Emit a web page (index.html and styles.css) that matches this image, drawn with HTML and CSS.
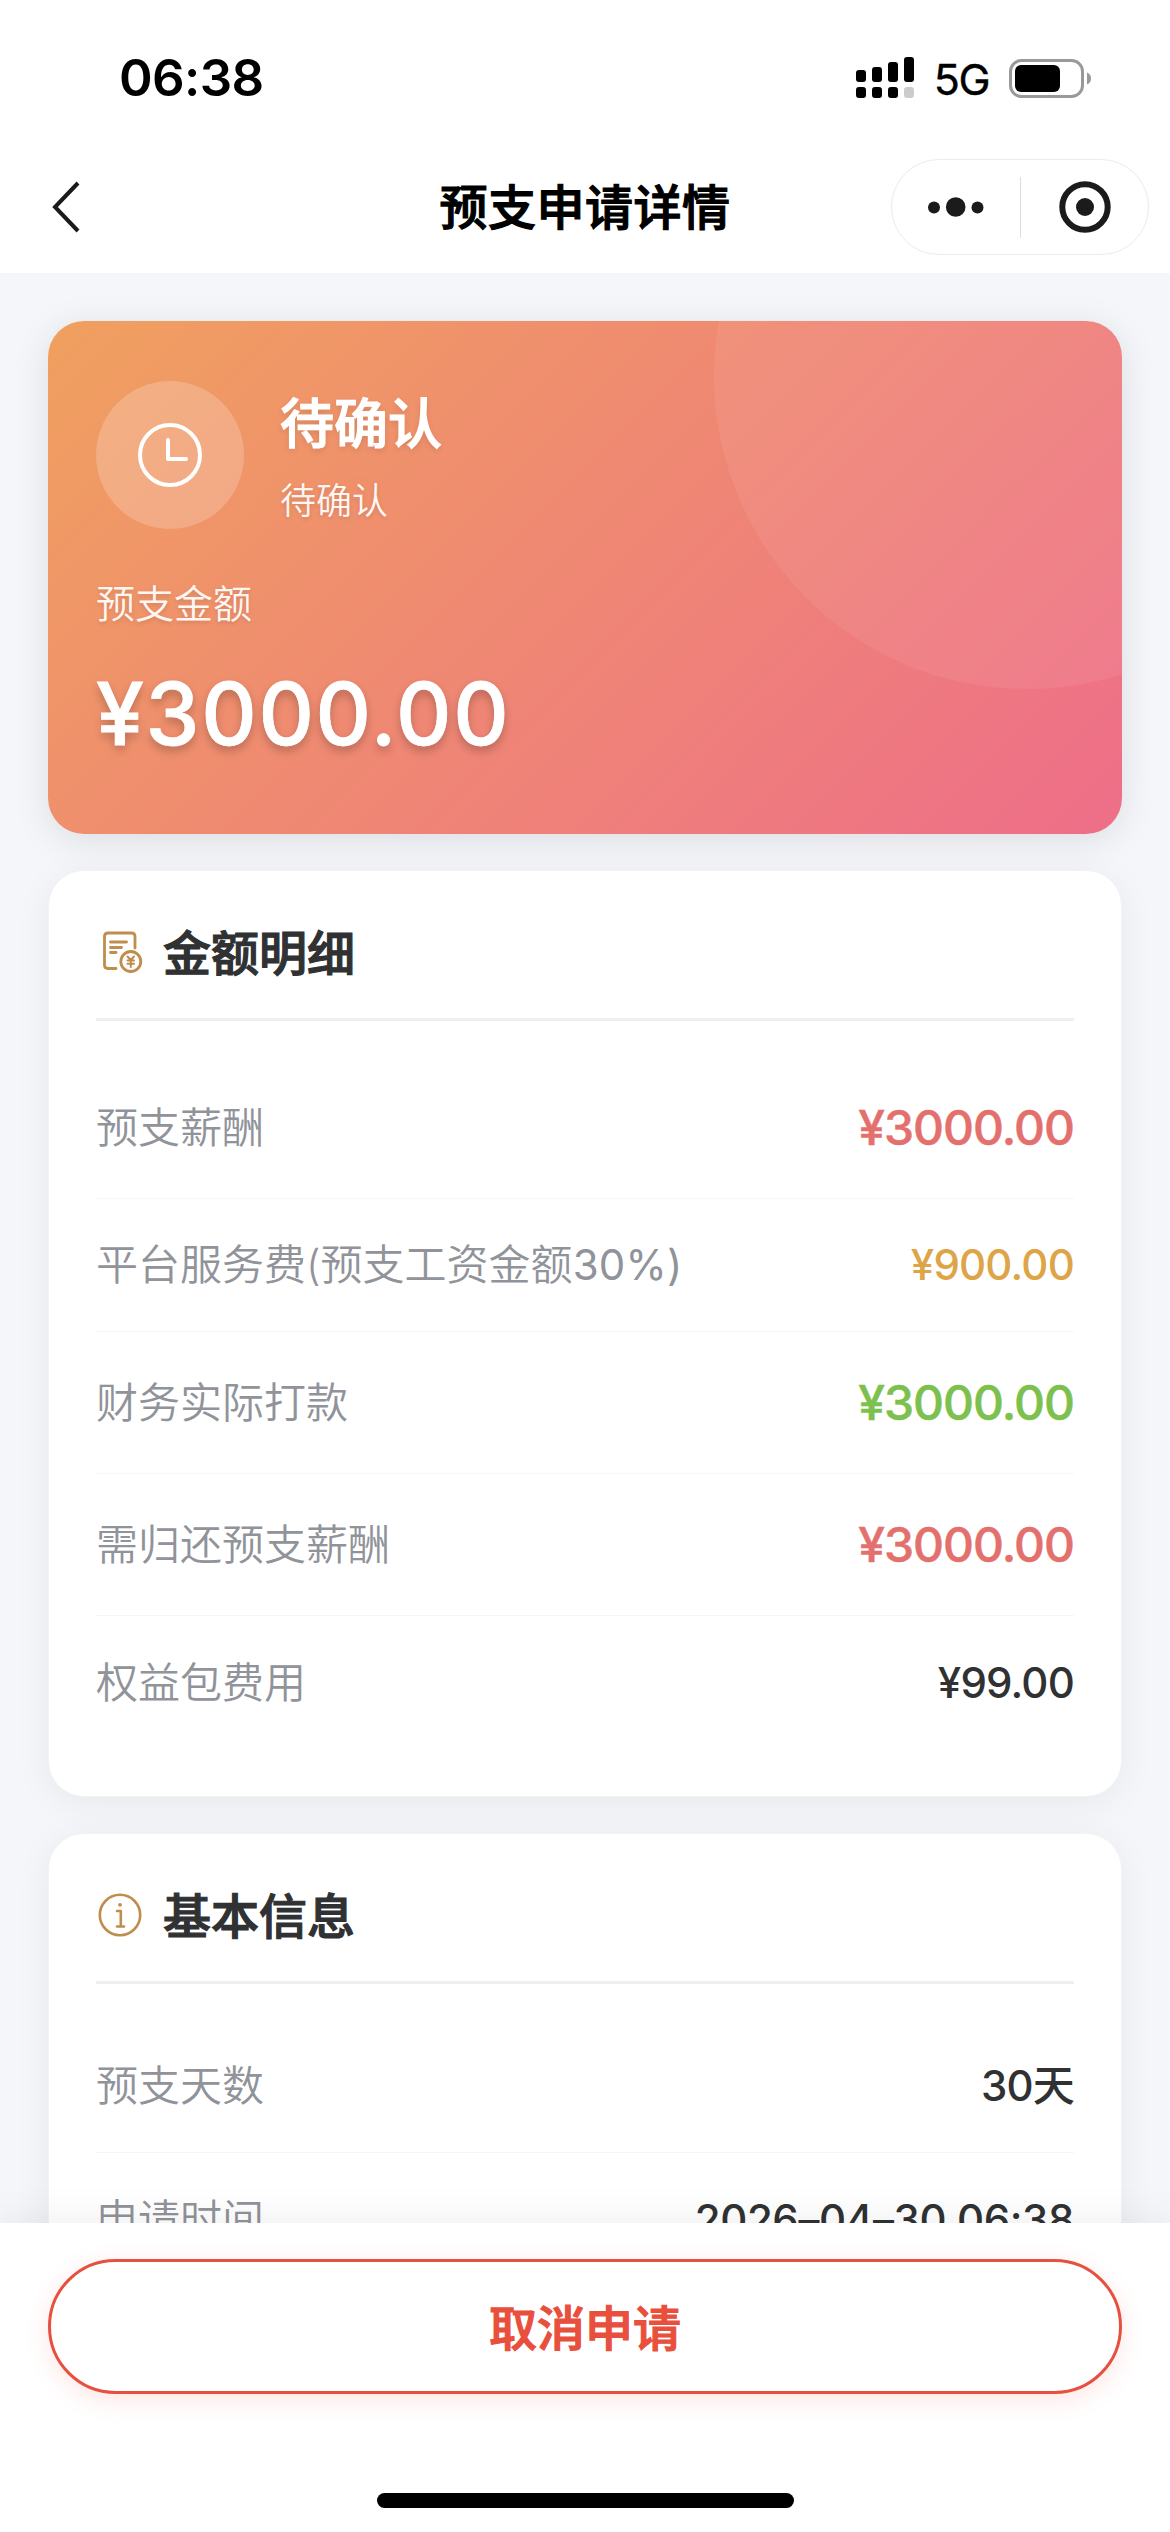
FILE: index.html
```html
<!DOCTYPE html>
<html lang="zh-CN">
<head>
<meta charset="utf-8">
<title>预支申请详情</title>
<link rel="stylesheet" href="styles.css">
</head>
<body>
<div class="page">
  <header class="top">
    <div class="status">
      <span class="time">06:38</span>
      <div class="status-right">
        <svg class="signal" width="58" height="42" viewBox="0 0 58 42">
          <rect x="0" y="13" width="10" height="12" rx="3"/><rect x="16" y="10" width="10" height="15" rx="3"/>
          <rect x="32" y="5" width="10" height="20" rx="3"/><rect x="48" y="0" width="10" height="25" rx="3"/>
          <rect x="0" y="30" width="10" height="11" rx="3"/><rect x="16" y="30" width="10" height="11" rx="3"/>
          <rect x="32" y="30" width="10" height="11" rx="3"/><rect x="48" y="30" width="10" height="11" rx="3" fill="#ccc"/>
        </svg>
        <span class="net">5G</span>
        <svg class="battery" width="83" height="39" viewBox="0 0 83 39">
          <rect x="1.5" y="1.5" width="72" height="36" rx="11" fill="none" stroke="#999" stroke-width="3"/>
          <rect x="6" y="6" width="45" height="27" rx="6"/>
          <path d="M78 13.500Q82 15 82 19.500T78 25.500Z" fill="#999"/>
        </svg>
      </div>
    </div>
    <nav class="nav">
      <svg class="back" width="30" height="54" viewBox="0 0 30 54"><path d="M27 3L4 27L27 51" fill="none" stroke="#1a1a1a" stroke-width="4"/></svg>
      <h1 class="nav-title">预支申请详情</h1>
      <div class="capsule">
        <svg class="dots" width="56" height="20" viewBox="0 0 56 20"><circle cx="6" cy="10.500" r="6"/><circle cx="27.700" cy="10" r="9.800"/><circle cx="49.500" cy="10.500" r="6"/></svg>
        <i class="capsule-line"></i>
        <svg class="target" width="52" height="52" viewBox="0 0 52 52"><circle cx="26" cy="26" r="22.700" fill="none" stroke="#1b1b1b" stroke-width="6"/><circle cx="26" cy="26" r="9"/></svg>
      </div>
    </nav>
  </header>

  <main class="content">
    <section class="hero">
      <div class="hero-top">
        <div class="hero-icon">
          <svg width="66" height="66" viewBox="0 0 66 66" fill="none" stroke="#fff" stroke-width="4" stroke-linecap="round" stroke-linejoin="round"><circle cx="33" cy="33" r="30"/><path d="M31 18V37H49"/></svg>
        </div>
        <div class="hero-state">
          <div class="state-title">待确认</div>
          <div class="state-desc">待确认</div>
        </div>
      </div>
      <div class="hero-label">预支金额</div>
      <div class="hero-amount">¥3000.00</div>
    </section>

    <section class="card">
      <div class="card-head">
        <svg class="card-icon" width="48" height="48" viewBox="0 0 48 48" fill="none" stroke="#bf8d4c" stroke-width="2.800" stroke-linecap="round" stroke-linejoin="round">
          <path d="M39 20V8.500Q39 5 35.500 5H12Q8.500 5 8.500 8.500V37Q8.500 40.500 12 40.500H20"/>
          <path d="M14.500 14H30.500M14.500 19.500H25.500M14.500 24.500H20"/>
          <circle cx="34.800" cy="33.500" r="10"/>
          <path d="M31.500 28.500L34.800 32L38 28.500M34.800 32V39M31.500 32.500H38M31.500 35.800H38" stroke-width="2"/>
        </svg>
        <h2>金额明细</h2>
      </div>
      <div class="row tall"><span class="label">预支薪酬</span><span class="value big red">¥3000.00</span></div>
      <div class="row"><span class="label">平台服务费(预支工资金额<span class="num">30%)</span></span><span class="value orange">¥900.00</span></div>
      <div class="row tall"><span class="label">财务实际打款</span><span class="value big green">¥3000.00</span></div>
      <div class="row tall"><span class="label">需归还预支薪酬</span><span class="value big red">¥3000.00</span></div>
      <div class="row last"><span class="label">权益包费用</span><span class="value">¥99.00</span></div>
    </section>

    <section class="card">
      <div class="card-head">
        <svg class="card-icon" width="48" height="48" viewBox="0 0 48 48" fill="none" stroke="#bf8d4c" stroke-width="2.600" stroke-linecap="round" stroke-linejoin="round">
          <circle cx="24" cy="24" r="20.200"/>
          <path d="M21 20H24.800V35M21 35.500H28"/>
          <circle cx="24" cy="13.800" r="1.900" fill="#bf8d4c" stroke="none"/>
        </svg>
        <h2>基本信息</h2>
      </div>
      <div class="row"><span class="label">预支天数</span><span class="value">30天</span></div>
      <div class="row last"><span class="label">申请时间</span><span class="value date">2026–04–30 06:38</span></div>
    </section>
  </main>

  <footer class="footer">
    <button class="cancel">取消申请</button>
    <div class="home-bar"></div>
  </footer>
</div>
</body>
</html>
```
FILE: styles.css
```css
* { box-sizing: border-box; }
body {
  margin: 0;
  font-family: Inter, "Noto Sans CJK SC", sans-serif;
  color: #303133;
  background: #f4f6fa;
}
h1, h2 { margin: 0; }
.page { display: flex; flex-direction: column; width: 1170px; height: 2532px; overflow: hidden; }

/* status bar and navigation */
.top { flex: none; height: 273px; background: #fff; }
.status { display: flex; justify-content: space-between; align-items: center; height: 156px; padding: 0 78px 0 119px; color: #000; }
.time { font-size: 51px; font-weight: 600; line-height: 60px; letter-spacing: -0.6px; }
.status-right { display: flex; align-items: center; }
.net { margin: 2px 20px 0 20px; font-size: 43px; line-height: 50px; letter-spacing: -1.500px; -webkit-text-stroke: 0.4px; }
.nav { display: grid; grid-template-columns: 258px 1fr 258px; align-items: center; height: 102px; padding: 0 21px; }
.back { margin-left: 30px; }
.nav-title { padding-top: 2px; font-size: 48px; font-weight: 500; line-height: 70px; text-align: center; color: #000; letter-spacing: 0.500px; -webkit-text-stroke: 1.200px; }
.capsule { display: flex; align-items: center; width: 258px; height: 96px; border: 1px solid #ebebeb; border-radius: 48px; }
.dots { margin-left: 36px; }
.dots, .target { fill: #1b1b1b; }
.capsule-line { width: 1px; height: 61px; margin: 0 38px 0 36px; background: #dedede; }

/* scrolling content */
.content { display: flex; flex: 1; flex-direction: column; gap: 36px; min-height: 0; padding: 48px 48px 0; overflow: hidden; }
.hero {
  position: relative;
  flex: none;
  height: 513px;
  padding: 60px 48px;
  overflow: hidden;
  color: #fff;
  border-radius: 36px;
  background: linear-gradient(135deg, #f0a05f, #ee6e89);
  box-shadow: 0 6px 36px rgba(0, 0, 0, 0.1);
}
.hero::after {
  content: "";
  position: absolute;
  top: -258px;
  left: 666px;
  width: 626px;
  height: 626px;
  border-radius: 50%;
  background: rgba(255, 255, 255, 0.065);
}
.hero-top { display: flex; align-items: center; gap: 36px; }
.hero-icon { display: flex; align-items: center; justify-content: center; width: 148px; height: 148px; border-radius: 50%; background: rgba(255, 255, 255, 0.2); }
.state-title { padding-top: 2px; font-size: 54px; font-weight: 500; line-height: 76px; -webkit-text-stroke: 1.200px; text-shadow: 0 3px 6px rgba(0, 0, 0, 0.12); }
.state-desc { margin-top: 13px; font-size: 36px; font-weight: 350; line-height: 50px; opacity: 0.92; text-shadow: 0 2px 4px rgba(0, 0, 0, 0.12); }
.hero-label { margin-top: 48px; font-size: 39px; font-weight: 350; line-height: 54px; opacity: 0.92; text-shadow: 0 2px 4px rgba(0, 0, 0, 0.12); }
.hero-amount { margin-top: 33px; font-size: 86px; font-weight: 500; line-height: 100px; letter-spacing: 1.700px; -webkit-text-stroke: 0.8px; text-shadow: 0 5px 10px rgba(0, 0, 0, 0.24); }

.card {
  flex: none;
  padding: 0 47px 47px;
  background: #fff;
  border: 1px solid #f2f3f5;
  border-radius: 36px;
  box-shadow: 0 6px 36px rgba(0, 0, 0, 0.06);
}
.card-head { display: flex; align-items: center; gap: 19px; height: 150px; margin-bottom: 36px; padding-top: 15px; border-bottom: 3px solid #efefef; }
.card-head h2 { padding-top: 3px; font-size: 48px; font-weight: 500; line-height: 68px; -webkit-text-stroke: 1.200px; }
.row { display: flex; align-items: center; justify-content: space-between; height: 133px; border-bottom: 1px solid #f5f6f8; }
.row.tall { height: 142px; }
.row.last { border-bottom: 0; }
.label { font-size: 42px; font-weight: 350; line-height: 60px; color: #909399; }
.num { font-weight: 400; letter-spacing: 0.2px; }
.value { font-size: 42px; font-weight: 500; line-height: 60px; letter-spacing: -0.8px; }
.value.big { font-size: 48px; letter-spacing: -1px; -webkit-text-stroke: 0.5px; }
.value.date { letter-spacing: -0.4px; }
.red { color: #e4706e; }
.orange { color: #dea548; }
.green { color: #7cc04d; }

/* bottom action bar */
.footer { position: relative; flex: none; height: 309px; padding: 36px 48px 0; background: #fff; box-shadow: 0 -6px 36px rgba(0, 0, 0, 0.06); }
.cancel {
  display: block;
  width: 100%;
  height: 135px;
  padding: 5px 0 0;
  font: 500 48px/70px Inter, "Noto Sans CJK SC", sans-serif;
  color: #e94f3d;
  background: #fff;
  border: 3px solid #e7503f;
  border-radius: 68px;
  -webkit-text-stroke: 1.200px;
  box-shadow: 0 6px 24px rgba(232, 76, 61, 0.14);
}
.home-bar { width: 417px; height: 15px; margin: 99px auto 0; background: #000; border-radius: 8px; }
```
